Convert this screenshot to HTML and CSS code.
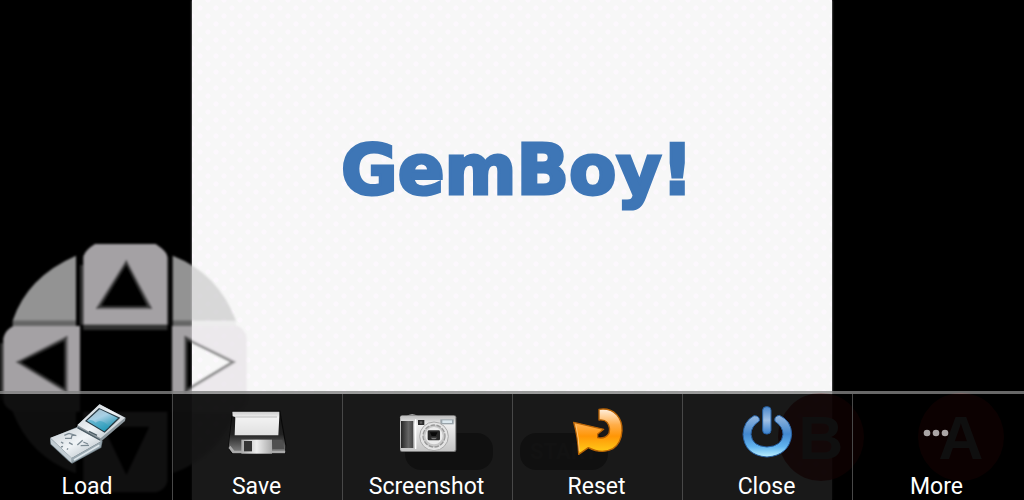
FILE: index.html
```html
<!DOCTYPE html>
<html lang="en">
<head>
<meta charset="utf-8">
<meta name="viewport" content="width=device-width, initial-scale=1">
<title>GemBoy!</title>
<link rel="stylesheet" href="styles.css">
</head>
<body>
<main class="emulator">
  <section class="screen">
    <h1 class="title">GemBoy!</h1>
  </section>

  <div class="controls">
    <svg class="dpad" viewBox="0 30 750 780" role="img" aria-label="Directional pad">
      <defs>
        <filter id="soft"><feGaussianBlur stdDeviation="2.5"/></filter>
      </defs>
      <g filter="url(#soft)">
        <path class="pad-wedge" d="M228 77V272H38Q82 140 228 77ZM518 77Q655 130 708 272H518ZM228 545V730Q90 680 38 545ZM518 545H708Q655 680 518 730Z"/>
        <path class="pad-seam" d="M38 272H228V288H38ZM518 272H708V288H518Z"/>
        <path class="pad-edge" d="M250 284H502V300H250ZM240 105H250V284H240ZM502 80H506V284H502ZM0 340H10V510H0Z"/>
        <path class="pad-arm" fill-rule="evenodd" d="M285 42H467Q502 65 502 80V284H250V80Q255 60 285 42ZM379 90L288 236H456Z"/>
        <path class="pad-arm" fill-rule="evenodd" d="M40 288H240V545H40Q10 530 10 510V325Q15 300 40 288ZM48 396L202 490V318Z"/>
        <path class="pad-arm" fill-rule="evenodd" d="M516 288H715Q740 305 740 325V510Q740 530 715 545H516ZM706 396L554 318V490Z"/>
        <path class="pad-arm" fill-rule="evenodd" d="M250 545H502V755Q495 780 467 787H285Q255 775 250 755ZM379 735L448 590H310Z"/>
        <path class="pad-outline" d="M379 96L296 232H448ZM54 396L197 482V326ZM700 396L558 326V482Z"/>
      </g>
    </svg>
    <button class="pill pill-select" type="button" aria-label="Select"></button>
    <button class="pill pill-start" type="button">START</button>
    <button class="round round-b" type="button">B</button>
    <button class="round round-a" type="button">A</button>
  </div>

  <nav class="menu">
    <button class="item" type="button">
      <svg class="icon" viewBox="141 45 240 192" aria-hidden="true">
        <defs>
          <linearGradient id="shell" x1="0" y1="0" x2="1" y2="1"><stop offset="0" stop-color="#c3cbd0"/><stop offset=".5" stop-color="#f0f4f7"/><stop offset="1" stop-color="#aeb8bf"/></linearGradient>
          <linearGradient id="lcd" x1="0" y1="0" x2=".6" y2="1"><stop offset="0" stop-color="#a9bcc8"/><stop offset=".45" stop-color="#a7d0e5"/><stop offset="1" stop-color="#178fae"/></linearGradient>
        </defs>
        <path d="M150 160L236 124L308 168L304 188L216 236L205 228L151 178Z" fill="#66747c"/>
        <path d="M151 158L236 126L306 167L215 219Z" fill="url(#shell)"/>
        <path d="M151 160L215 219V234L153 177Z" fill="#c3cdd3"/>
        <path d="M215 219L306 168L302 187L217 233Z" fill="#9aa8b0"/>
        <path d="M222 225L298 181" stroke="#dce5ea" stroke-width="5"/>
        <path d="M232 122L298 58L377 98L375 108L304 169L296 165L230 129Z" fill="#8d989e"/>
        <path d="M232 120L299 58L375 98L302 160Z" fill="url(#shell)"/>
        <path d="M255 108L297 69L361 98L314 143Z" fill="#283b44"/>
        <path d="M261 107L299 73L354 99L313 139Z" fill="url(#lcd)"/>
        <path d="M262 108Q276 100 287 113Q305 98 328 126L313 139Z" fill="#2c9fc0" opacity=".5"/>
        <path d="M233 128L300 165M267 139L291 151" stroke="#4b5b64" stroke-width="4"/>
        <g fill="none" stroke="#7c8a93" stroke-width="4">
          <path d="M193 151L207 145M195 160L212 160M207 145L229 152M217 148L213 162M183 171L190 175M183 186L189 184M204 190L201 194M232 180L248 166M242 182L267 181M250 171L264 177M207 173L218 179"/>
        </g>
      </svg>
      <span class="label">Load</span>
    </button>
    <button class="item" type="button">
      <svg class="icon" viewBox="141 45 240 192" aria-hidden="true">
        <defs>
          <linearGradient id="disk" x1="0" y1="0" x2="0" y2="1"><stop offset="0" stop-color="#111"/><stop offset=".55" stop-color="#222"/><stop offset="1" stop-color="#858585"/></linearGradient>
          <linearGradient id="paper" x1="0" y1="0" x2="0" y2="1"><stop offset="0" stop-color="#ccc"/><stop offset=".25" stop-color="#f2f2f2"/><stop offset="1" stop-color="#e0e0e0"/></linearGradient>
          <linearGradient id="shutter"><stop offset="0" stop-color="#aaa"/><stop offset=".5" stop-color="#eee"/><stop offset="1" stop-color="#aaa"/></linearGradient>
        </defs>
        <path d="M186 77H331L349 181L346 207H186L174 190L177 160Z" fill="#080808"/>
        <path d="M189 80H328L346 182L345 204H188L176 190L179 160Z" fill="url(#disk)"/>
        <path d="M176 188L188 205H345L346 197H193L181 182Z" fill="#aaa"/>
        <path d="M187 80H328V94L325 151H194L196 96L188 94Z" fill="url(#paper)"/>
        <path d="M196 96H321" stroke="#bbb" stroke-width="3"/>
        <path d="M214 164H306V206H214Z" fill="url(#shutter)"/>
        <path d="M222 168H246V199H222Z" fill="#353535"/>
        <path d="M307 164H337L343 192H307Z" fill="#505050"/>
      </svg>
      <span class="label">Save</span>
    </button>
    <button class="item" type="button">
      <svg class="icon" viewBox="141 45 240 192" aria-hidden="true">
        <defs>
          <linearGradient id="camera" x1="0" y1="0" x2="0" y2="1"><stop offset="0" stop-color="#bbb"/><stop offset=".25" stop-color="#eee"/><stop offset="1" stop-color="#c5c5c5"/></linearGradient>
          <linearGradient id="grip"><stop offset="0" stop-color="#252525"/><stop offset=".6" stop-color="#666"/><stop offset="1" stop-color="#444"/></linearGradient>
        </defs>
        <path d="M200 92Q216 83 234 92Z" fill="#ccc"/>
        <rect x="180" y="91" width="169" height="110" rx="6" fill="#777"/>
        <rect x="181" y="92" width="165" height="106" rx="5" fill="url(#camera)"/>
        <path d="M183 108H220V189H183Z" fill="url(#grip)"/>
        <path d="M225 103H229V192H225Z" fill="#fff"/>
        <rect x="234" y="105" width="19" height="15" fill="#292929"/>
        <rect x="239" y="109" width="8" height="7" fill="#5d5d5d"/>
        <rect x="301" y="103" width="40" height="15" fill="#9aa4aa"/>
        <rect x="307" y="106" width="29" height="8" fill="#dbe7ed"/>
        <circle cx="282" cy="154" r="43" fill="#e4e4e4" stroke="#aaa" stroke-width="3"/>
        <circle cx="282" cy="153" r="33" fill="#c7c7c7" stroke="#999" stroke-width="4" stroke-dasharray="14 4"/>
        <circle cx="282" cy="152" r="26" fill="#ececec"/>
        <rect x="263" y="136" width="37" height="30" rx="4" fill="#282828"/>
        <path d="M270 142H293L287 153H275Z" fill="#090909"/>
        <path d="M272 158H291L286 163H277Z" fill="#777"/>
      </svg>
      <span class="label">Screenshot</span>
    </button>
    <button class="item" type="button">
      <svg class="icon" viewBox="141 45 240 192" aria-hidden="true">
        <defs>
          <linearGradient id="arrow" x1="0" y1="0" x2="0" y2="1"><stop offset="0" stop-color="#fff0df"/><stop offset=".35" stop-color="#ffad48"/><stop offset=".6" stop-color="#ff9606"/><stop offset="1" stop-color="#ffd31c"/></linearGradient>
        </defs>
        <path d="M267 73Q300 68 320 89Q337 108 336 137Q334 174 309 191Q276 209 235 188L206 208Q204 157 191 112L281 133L263 147V158Q285 163 297 145Q302 127 291 112Q283 103 267 105Z" fill="url(#arrow)" stroke="#b76205" stroke-width="4" stroke-linejoin="round"/>
        <path d="M208 199Q206 158 198 121" fill="none" stroke="#ffc477" stroke-width="3"/>
      </svg>
      <span class="label">Reset</span>
    </button>
    <button class="item" type="button">
      <svg class="icon" viewBox="141 45 240 192" aria-hidden="true">
        <defs>
          <linearGradient id="ring" x1="0" y1="0" x2="0" y2="1"><stop offset="0" stop-color="#96b8df"/><stop offset=".45" stop-color="#4388cf"/><stop offset=".75" stop-color="#62b4ef"/><stop offset="1" stop-color="#bcf1ff"/></linearGradient>
          <linearGradient id="stem" x1="0" y1="0" x2="0" y2="1"><stop offset="0" stop-color="#4c88cb"/><stop offset=".5" stop-color="#a0c0e5"/><stop offset="1" stop-color="#3780cf"/></linearGradient>
        </defs>
        <path d="M222 92Q240 92 238 108Q213 124 213 148Q216 184 261 186Q306 184 309 148Q309 125 285 109Q281 94 298 91Q334 107 335 148Q329 211 261 216Q193 211 189 148Q191 108 222 92Z" fill="url(#ring)" stroke="#2860a1" stroke-width="3"/>
        <rect x="248" y="65" width="25" height="82" rx="11" fill="url(#stem)" stroke="#2860a1" stroke-width="3"/>
      </svg>
      <span class="label">Close</span>
    </button>
    <button class="item" type="button">
      <svg class="icon" viewBox="141 45 240 192" aria-hidden="true">
        <g fill="#aaa6a6"><circle cx="231" cy="144" r="10"/><circle cx="258" cy="144" r="10"/><circle cx="285" cy="144" r="10"/></g>
      </svg>
      <span class="label">More</span>
    </button>
  </nav>
</main>
</body>
</html>
```
FILE: styles.css
```css
* {
  box-sizing: border-box;
}

body {
  margin: 0;
  background: #000;
  font-family: Roboto, "Liberation Sans", sans-serif;
}

button {
  margin: 0;
  padding: 0;
  border: 0;
  background: none;
  color: inherit;
  font: inherit;
}

.emulator {
  position: relative;
  display: flex;
  justify-content: center;
  min-height: 100vh;
  overflow: hidden;
}

.screen {
  display: flex;
  justify-content: center;
  width: 62.5%;
  padding: 122px 0 0 10px;
  box-shadow: 0 0 2px #aaa;
  background-color: #f7f7f7;
  background-image:
    radial-gradient(circle, #fcf8fd 2px, transparent 3px),
    radial-gradient(circle, #fcf8fd 2px, transparent 3px);
  background-position: 0 0, 8px 8px;
  background-size: 16px 16px;
}

.title {
  margin: 0;
  color: #3e76b6;
  font-family: "DejaVu Sans", "Open Sans", sans-serif;
  font-size: 69px;
  font-weight: 700;
  line-height: 96px;
  -webkit-text-stroke: 3px #3e76b6;
}

.controls {
  position: absolute;
  inset: 0;
}

.dpad {
  position: absolute;
  bottom: 0;
  left: 0;
  width: 250px;
  height: 260px;
}

.pad-arm {
  fill: rgba(231, 227, 231, 0.71);
}

.pad-wedge {
  fill: rgba(204, 204, 204, 0.72);
}

.pad-seam {
  fill: rgba(225, 225, 225, 0.45);
}

.pad-edge {
  fill: rgba(225, 225, 225, 0.22);
}

.pad-outline {
  fill: none;
  stroke: rgba(90, 90, 90, 0.7);
  stroke-width: 8px;
}

.pill {
  position: absolute;
  bottom: 30px;
  width: 88px;
  height: 37px;
  border-radius: 16px;
  background: rgba(0, 0, 0, 0.35);
  color: rgba(255, 255, 255, 0.2);
  font-size: 22px;
  font-weight: 700;
}

.pill-select {
  right: 531px;
}

.pill-start {
  right: 416px;
}

.round {
  position: absolute;
  bottom: 19px;
  width: 86px;
  height: 88px;
  border-radius: 50%;
  background: rgba(170, 20, 20, 0.7);
  color: #999;
  font-family: "Liberation Sans", sans-serif;
  font-size: 62px;
  font-weight: 700;
}

.round-b {
  right: 160px;
}

.round-a {
  right: 20px;
}

.menu {
  position: absolute;
  right: 0;
  bottom: 0;
  left: 0;
  display: grid;
  grid-template-columns: repeat(6, 1fr);
  padding: 0 2px;
  border-top: 3px solid rgba(130, 130, 130, 0.8);
  background: rgba(0, 0, 0, 0.9);
  background-clip: padding-box;
}

.item {
  display: flex;
  flex-direction: column;
  align-items: center;
  gap: 10px;
  padding: 6px 0 0;
}

.item + .item {
  padding-right: 2px;
  border-left: 1px solid #484848;
}

.icon {
  width: 80px;
  height: 64px;
}

.label {
  color: #fff;
  font-size: 23px;
  line-height: 26px;
}
```
